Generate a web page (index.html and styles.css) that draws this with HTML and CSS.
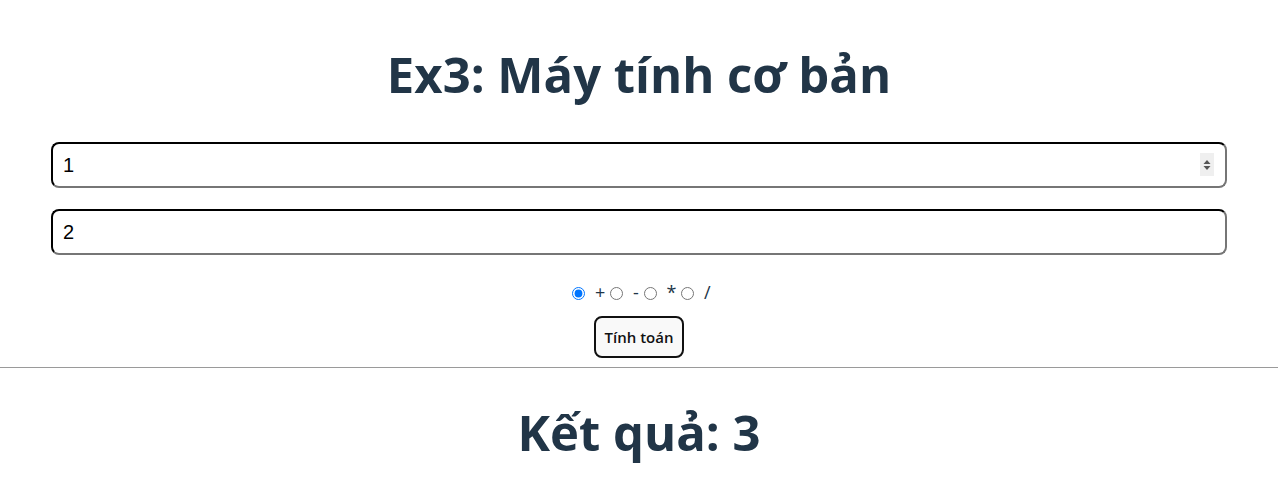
FILE: index.html
```html
<!DOCTYPE html>
<html lang="vi">
<head>
<meta charset="utf-8">
<title>Ex3</title>
<link rel="stylesheet" href="styles.css">
</head>
<body>
<div class="app">
  <h1 class="title">Ex3: Máy tính cơ bản</h1>
  <form class="calc">
    <div class="field-wrap">
      <input class="field" type="text" value="1">
      <span class="spin" aria-hidden="true">
        <svg width="8" height="14" viewBox="0 0 8 14"><path d="M4 2 L7.5 6 H0.5 Z" fill="#555"/><path d="M4 12 L7.5 8 H0.5 Z" fill="#555"/></svg>
      </span>
    </div>
    <div class="field-wrap">
      <input class="field" type="text" value="2">
    </div>
    <div class="ops">
      <label class="op"><input type="radio" name="op" checked> +</label>
      <label class="op"><input type="radio" name="op"> -</label>
      <label class="op"><input type="radio" name="op"> *</label>
      <label class="op"><input type="radio" name="op"> /</label>
    </div>
    <button class="btn" type="button">Tính toán</button>
  </form>
  <hr class="sep">
  <h2 class="result">Kết quả: 3</h2>
</div>
</body>
</html>
```
FILE: styles.css
```css
html, body {
  margin: 0;
  padding: 0;
  background: #ffffff;
}
body {
  font-family: "Open Sans", "Noto Sans", sans-serif;
  color: #213547;
}
.app {
  display: flex;
  flex-direction: column;
  align-items: stretch;
}
.title {
  margin: 38px 0 0;
  text-align: center;
  font-size: 49px;
  font-weight: 700;
  line-height: 72px;
}
.calc {
  display: flex;
  flex-direction: column;
  align-items: center;
  padding: 32px 51px 0;
}
.field-wrap {
  position: relative;
  width: 100%;
  margin-bottom: 21px;
}
.field-wrap + .field-wrap {
  margin-bottom: 25px;
}
.field {
  box-sizing: border-box;
  display: block;
  width: 100%;
  height: 46px;
  margin: 0;
  padding: 0 10px;
  border: 2px inset #767676;
  border-top-color: #1a1a1a;
  border-left-color: #1a1a1a;
  border-radius: 8px;
  font-family: "Liberation Sans", Arial, sans-serif;
  font-size: 20px;
  color: #000;
  background: #fff;
}
.spin {
  position: absolute;
  right: 13px;
  top: 11px;
  width: 14px;
  height: 23px;
  background: #efefef;
  display: flex;
  align-items: center;
  justify-content: center;
}
.ops {
  display: flex;
  font-size: 18px;
  line-height: 24px;
  word-spacing: 2px;
}
.op input {
  width: 13px;
  height: 13px;
  margin: 3px 3px 0 5px;
  vertical-align: -1px;
}
.btn {
  margin-top: 12px;
  width: 90px;
  height: 42px;
  border: 2px solid #111;
  border-radius: 8px;
  background: #f9f9f9;
  font-family: "Open Sans", sans-serif;
  font-size: 15px;
  font-weight: 600;
  color: #111;
  padding: 0;
}
.sep {
  width: 100%;
  margin: 9px 0 0;
  border: 0;
  border-top: 1px solid #9a9a9a;
  height: 0;
}
.result {
  margin: 28px 0 0;
  text-align: center;
  font-size: 49px;
  font-weight: 700;
  line-height: 72px;
}
```
